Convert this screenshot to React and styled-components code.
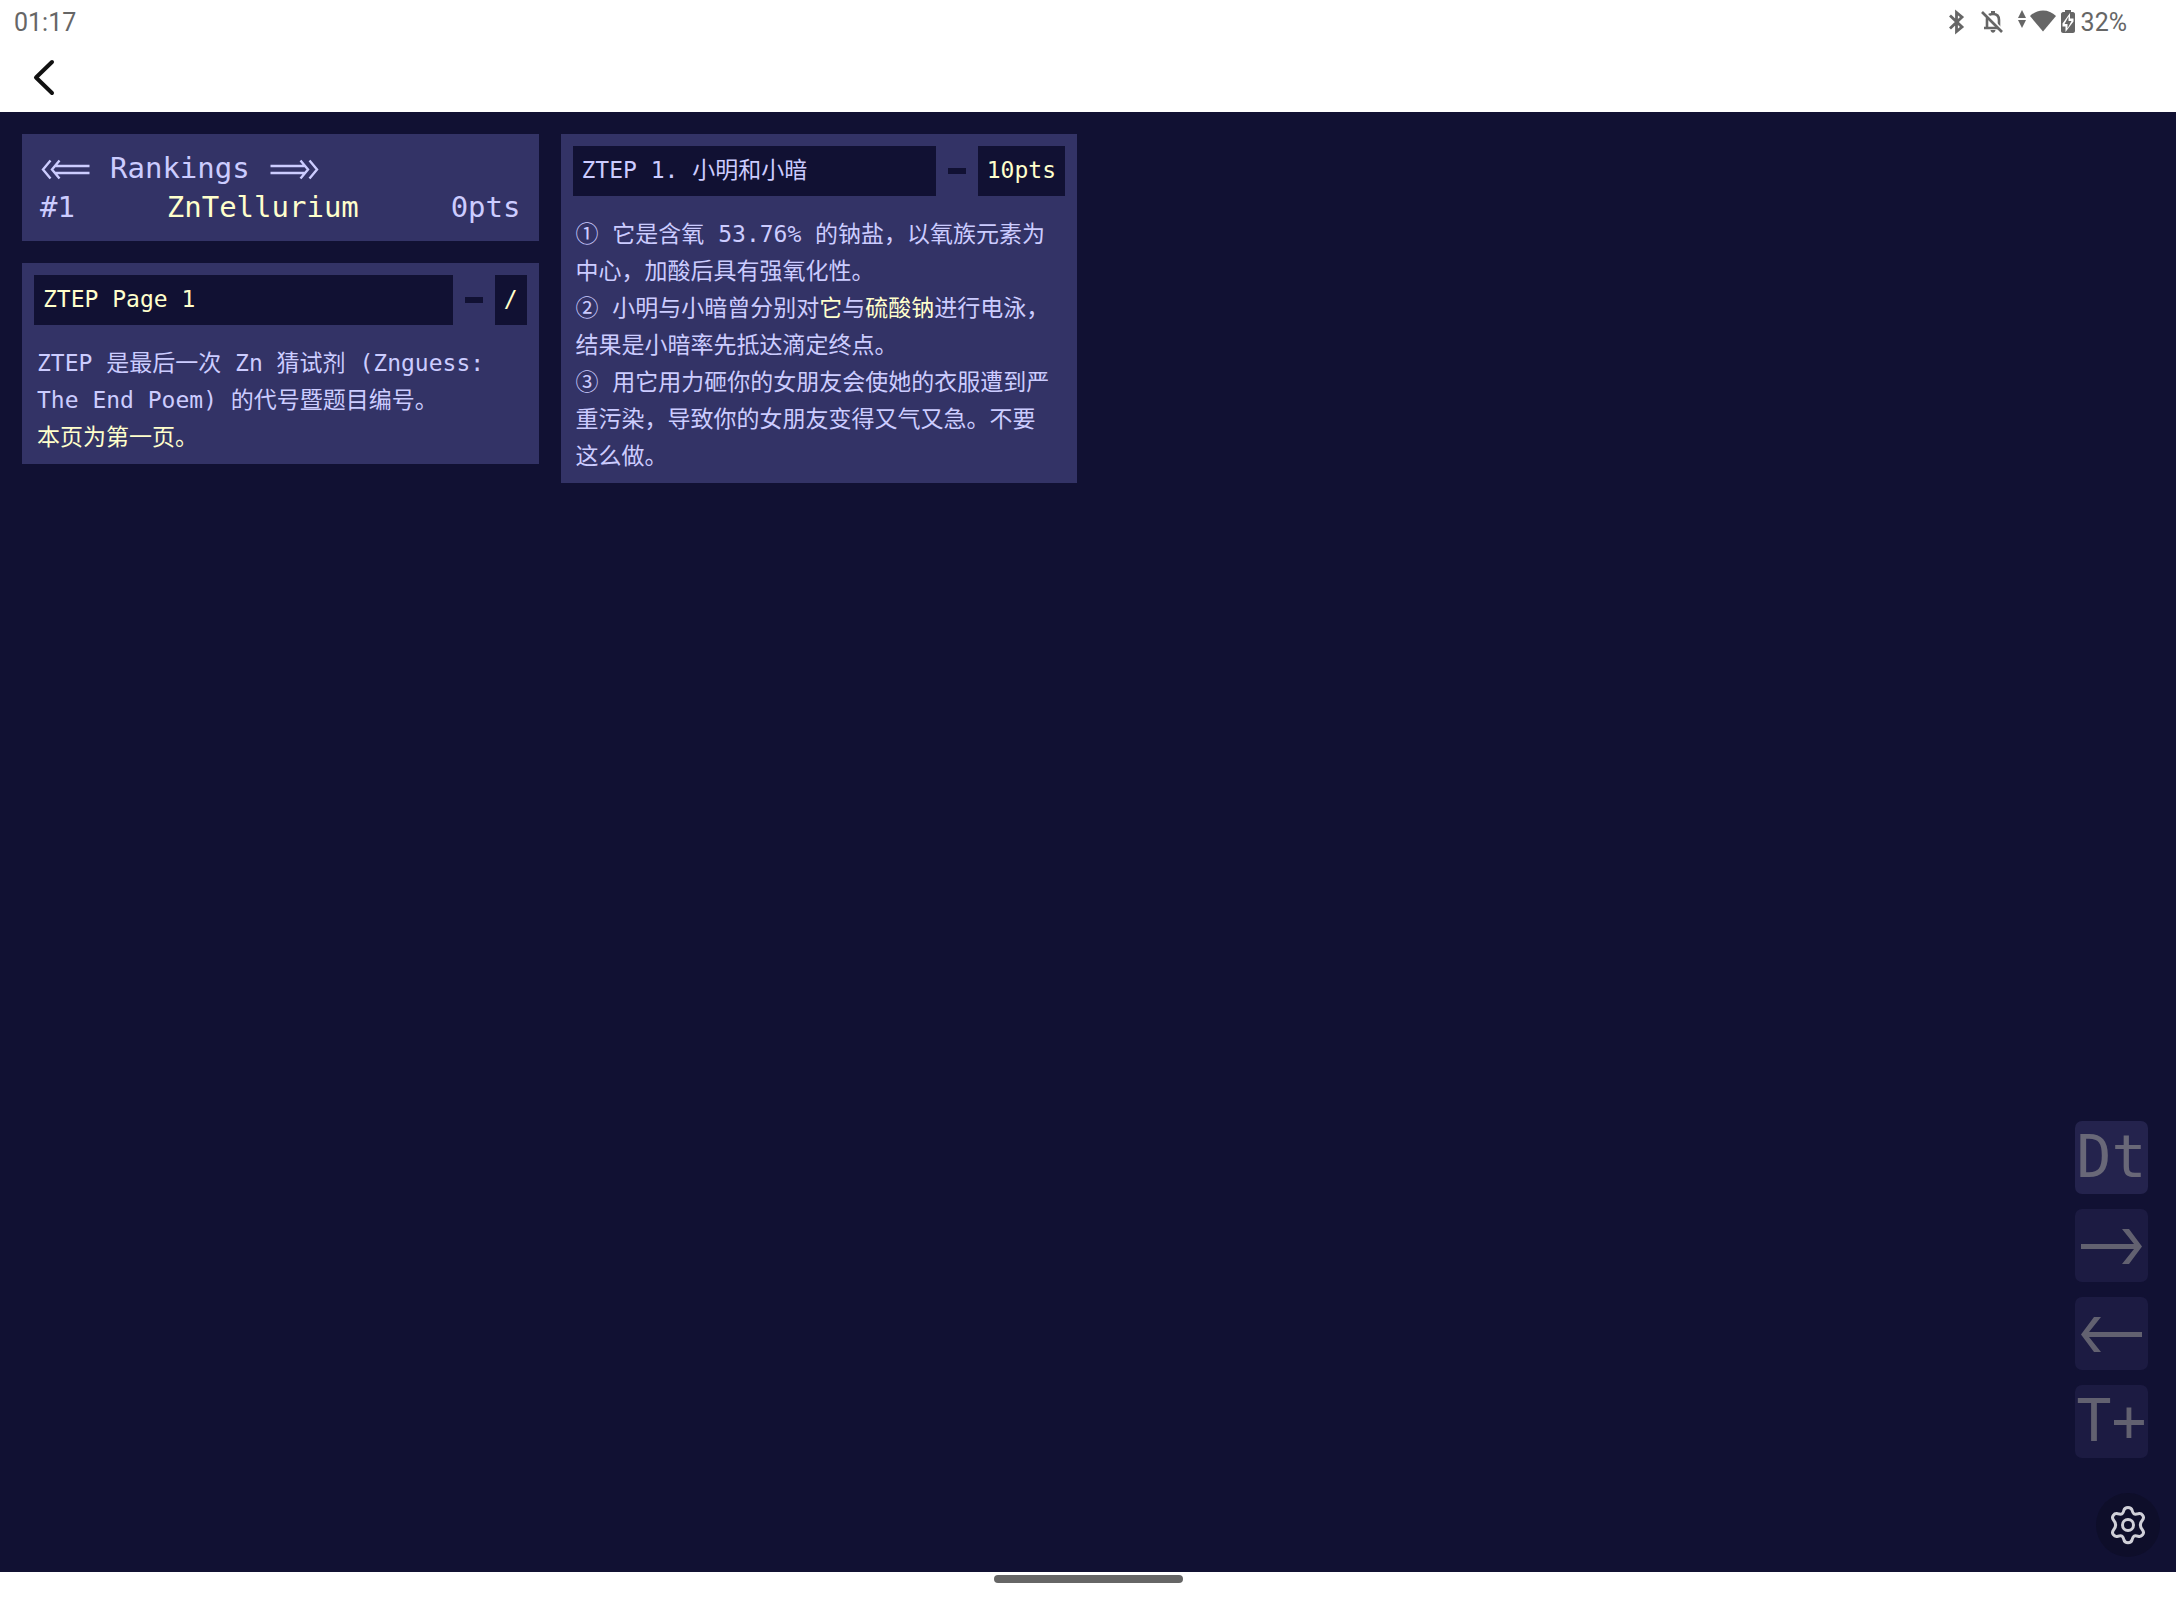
import React from 'react';
import styled, { createGlobalStyle } from 'styled-components';

const GlobalStyle = createGlobalStyle`
  * {
    box-sizing: border-box;
  }

  body {
    margin: 0;
    background: #fff;
    color: #ccccff;
    font-family: 'DejaVu Sans Mono', 'Noto Sans CJK SC', monospace;
  }

  button {
    border: 0;
    padding: 0;
    font: inherit;
    cursor: pointer;
  }
`;

const Screen = styled.div`
  display: flex;
  flex-direction: column;
  min-height: 100vh;
`;

const StatusBar = styled.div`
  display: flex;
  align-items: center;
  justify-content: space-between;
  height: 44px;
  padding: 0 49px 0 14px;
  color: #666;
  font-family: Roboto, sans-serif;
  font-size: 25px;
`;

const StatusIcons = styled.div`
  display: flex;
  align-items: center;
  gap: 4px;
`;

const NavBar = styled.nav`
  display: flex;
  align-items: center;
  height: 68px;
  padding: 0 24px;
`;

const BackButton = styled.button`
  display: flex;
  width: 40px;
  height: 48px;
  background: none;
`;

const Main = styled.main`
  position: relative;
  flex: 1;
  padding: 22px;
  background: #111133;
`;

const Board = styled.div`
  display: grid;
  grid-template-columns: repeat(4, 1fr);
  gap: 22px;
  align-items: start;
`;

const Column = styled.div`
  display: flex;
  flex-direction: column;
  gap: 22px;
`;

const RankingCard = styled.section`
  padding: 15px 18px 14px;
  background: #333366;
  font-size: 29px;
  line-height: 39px;
`;

const RankingTitle = styled.h2`
  display: flex;
  align-items: center;
  gap: 18px;
  margin: 0;
  font-size: 29px;
  font-weight: 400;
`;

const RankingRow = styled.div`
  display: flex;
  justify-content: space-between;
`;

const Highlight = styled.span`
  color: #ffffcc;
`;

const Card = styled.article`
  padding: 12px 12px 8px;
  background: #333366;
  font-size: 23px;
`;

const CardHeader = styled.header`
  display: flex;
  align-items: center;
  gap: 12px;
`;

const CardTitle = styled.h3`
  flex: 1;
  height: 50px;
  margin: 0;
  padding: 0 9px;
  background: #111133;
  color: ${({ $bright }) => ($bright ? '#ffffcc' : '#ccccff')};
  font-size: 23px;
  font-weight: 400;
  line-height: 48px;
`;

const Dash = styled.span`
  width: 18px;
  height: 6px;
  background: #111133;
`;

const Points = styled.span`
  height: 50px;
  padding: 0 9px;
  background: #111133;
  color: #ffffcc;
  line-height: 48px;
`;

const CardBody = styled.p`
  margin: 20px 8px 0 3px;
  line-height: 37px;
`;

const Dock = styled.div`
  position: absolute;
  right: 28px;
  bottom: 114px;
  display: flex;
  flex-direction: column;
  gap: 15px;
`;

const DockButton = styled.button`
  display: flex;
  align-items: center;
  justify-content: center;
  width: 73px;
  height: 73px;
  border-radius: 7px;
  background: ${({ $active }) => ($active ? '#24234d' : '#1c1b42')};
  color: ${({ $active }) => ($active ? '#696878' : '#626170')};
  font-size: 58px;
  line-height: 73px;
`;

const SettingsButton = styled.button`
  position: absolute;
  right: 16px;
  bottom: 15px;
  display: flex;
  align-items: center;
  justify-content: center;
  width: 64px;
  height: 64px;
  border-radius: 50%;
  background: #0e0e2a;
`;

const HomeBar = styled.div`
  display: flex;
  justify-content: center;
  height: 28px;
  padding-top: 3px;
`;

const HomeHandle = styled.div`
  width: 189px;
  height: 8px;
  border-radius: 4px;
  background: #666;
`;

const LongArrow = ({ flip }) => (
  <svg width="52" height="24" viewBox="0 0 52 24" fill="none" stroke="currentColor" strokeWidth="2.4" role="img" aria-label={flip ? '=>>' : '<<='}>
    <g transform={flip ? 'translate(52 0) scale(-1 1)' : undefined}>
      <path d="M10.500 3.500L3 12.500L10.500 21.500M19.500 3.500L12 12.500L19.500 21.500M15 9H49.500M15 16H49.500" />
    </g>
  </svg>
);

const DockArrow = ({ flip }) => (
  <svg width="73" height="73" viewBox="0 0 73 73" fill="currentColor" aria-hidden="true">
    <path
      transform={flip ? 'translate(73 0) scale(-1 1)' : undefined}
      d="M47 20H54L67 37.500L54 55H47L59 40H6V35H59Z"
    />
  </svg>
);

const cards = {
  intro: {
    title: 'ZTEP Page 1',
    points: '/',
    bright: true,
  },
  first: {
    title: 'ZTEP 1. 小明和小暗',
    points: '10pts',
  },
};

const Question = ({ title, points, bright, children }) => (
  <Card>
    <CardHeader>
      <CardTitle $bright={bright}>{title}</CardTitle>
      <Dash />
      <Points>{points}</Points>
    </CardHeader>
    <CardBody>{children}</CardBody>
  </Card>
);

const App = () => {
  return (
    <Screen lang="zh-CN">
      <GlobalStyle />
      <StatusBar>
        <span>01:17</span>
        <StatusIcons>
          <svg width="134" height="32" viewBox="1942 5 134 32" fill="#666" aria-hidden="true">
            <path d="M1949 14.500L1961 26L1955.500 30.500V11.500L1961 16L1949 27.500" fill="none" stroke="#666" strokeWidth="2.800" />
            <path d="M1986 27V18C1986 15 1988 13 1992 13C1996 13 1998 15 1998 19V27M1983 27H1999" fill="none" stroke="#666" strokeWidth="2.600" />
            <path d="M1990 10H1994V13H1990ZM1989.500 29H1994.500C1994 32.500 1990 32.500 1989.500 29Z" />
            <path d="M1983 11L2003 31" fill="none" stroke="#fff" strokeWidth="3" />
            <path d="M1981 11L2001 31" fill="none" stroke="#666" strokeWidth="2.600" />
            <path d="M2017 17L2021 9L2025 17ZM2017 19H2025L2021 27Z" />
            <path d="M2029 15C2036 7.500 2048 7.500 2055 15L2042 30.500Z" />
            <path d="M2062 11H2064V9H2070V11H2072C2073 11 2074 12 2074 13V30C2074 31 2073 32 2072 32H2062C2061 32 2060 31 2060 30V13C2060 12 2061 11 2062 11Z" />
            <path d="M2069 12L2061.500 22.500V25.500H2064.500V31L2072.500 20.500V17.500H2069Z" fill="#fff" />
            <path d="M2067.500 15.500L2063.500 23H2066.500V27.500L2070.500 20H2067.500Z" />
          </svg>
          <span>32%</span>
        </StatusIcons>
      </StatusBar>
      <NavBar>
        <BackButton aria-label="Back">
          <svg width="40" height="48" viewBox="0 0 40 48" fill="none" stroke="#111" strokeWidth="4" strokeLinecap="round" strokeLinejoin="round">
            <path d="M28 8L12 23.500L28 39" />
          </svg>
        </BackButton>
      </NavBar>
      <Main>
        <Board>
          <Column>
            <RankingCard>
              <RankingTitle>
                <LongArrow />
                Rankings
                <LongArrow flip />
              </RankingTitle>
              <RankingRow>
                <span>#1</span>
                <Highlight>ZnTellurium</Highlight>
                <span>0pts</span>
              </RankingRow>
            </RankingCard>
            <Question {...cards.intro}>
              ZTEP 是最后一次 Zn 猜试剂 (Znguess: The End Poem) 的代号暨题目编号。
              <br />
              <Highlight>本页为第一页。</Highlight>
            </Question>
          </Column>
          <Column>
            <Question {...cards.first}>
              ① 它是含氧 53.76% 的钠盐，以氧族元素为中心，加酸后具有强氧化性。
              <br />
              ② 小明与小暗曾分别对<Highlight>它</Highlight>与<Highlight>硫酸钠</Highlight>进行电泳，结果是小暗率先抵达滴定终点。
              <br />
              ③ 用它用力砸你的女朋友会使她的衣服遭到严重污染，导致你的女朋友变得又气又急。不要这么做。
            </Question>
          </Column>
        </Board>
        <Dock>
          <DockButton $active>Dt</DockButton>
          <DockButton aria-label="Next">
            <DockArrow />
          </DockButton>
          <DockButton aria-label="Previous">
            <DockArrow flip />
          </DockButton>
          <DockButton>T+</DockButton>
        </Dock>
        <SettingsButton aria-label="Settings">
          <svg width="40" height="40" viewBox="0 0 40 40" fill="none" stroke="#d0d0d8" strokeWidth="3" strokeLinejoin="round">
            <circle cx="20" cy="20" r="5.500" />
            <path d="M16 5C17 1.500 23 1.500 24 5C25 9 26 9.800 30 8.800C34 7.500 37 12 34.500 15C31.500 18.500 31.500 21.500 34.500 25C37 28 34 32.500 30 31.200C26 30.200 25 31 24 35C23 38.500 17 38.500 16 35C15 31 14 30.200 10 31.200C6 32.500 3 28 5.500 25C8.500 21.500 8.500 18.500 5.500 15C3 12 6 7.500 10 8.800C14 9.800 15 9 16 5Z" />
          </svg>
        </SettingsButton>
      </Main>
      <HomeBar>
        <HomeHandle />
      </HomeBar>
    </Screen>
  );
};

export default App;
